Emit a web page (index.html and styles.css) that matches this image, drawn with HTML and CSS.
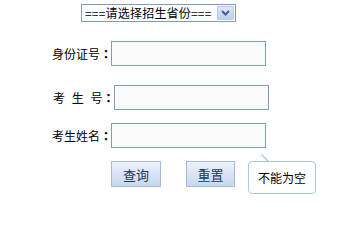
FILE: index.html
```html
<!DOCTYPE html>
<html>
<head>
<meta charset="utf-8">
<link rel="stylesheet" href="styles.css">
</head>
<body>
<div class="page">
  <div class="select-row">
    <div class="select">
      <span class="select-text">===请选择招生省份===</span>
      <span class="select-btn"><svg width="9" height="6" viewBox="0 0 9 6"><path d="M1 1 L4.5 4.5 L8 1" fill="none" stroke="#4a5f86" stroke-width="2"/></svg></span>
    </div>
  </div>
  <div class="row row-1">
    <span class="label label-a">身份证号<span class="colon">：</span></span>
    <span class="input"></span>
  </div>
  <div class="row row-2">
    <span class="label label-b">考 生 号<span class="colon">：</span></span>
    <span class="input"></span>
  </div>
  <div class="row row-3">
    <span class="label label-a">考生姓名<span class="colon">：</span></span>
    <span class="input"></span>
  </div>
  <div class="actions">
    <span class="btn btn-query">查询</span>
    <span class="btn btn-reset">重置</span>
    <div class="tip">不能为空</div>
  </div>
</div>
</body>
</html>
```
FILE: styles.css
```css
html, body {
  margin: 0;
  padding: 0;
  background: #ffffff;
}
body {
  font-family: "Noto Sans CJK SC", "Liberation Sans", sans-serif;
  font-size: 12px;
  color: #000000;
}
.page {
  padding-top: 4px;
}
.select-row {
  padding-left: 81px;
}
.select {
  box-sizing: border-box;
  width: 155px;
  height: 18px;
  border: 1px solid #7f9db9;
  display: flex;
  align-items: center;
  justify-content: space-between;
  padding: 0 1px 0 3px;
  background: #fff;
}
.select-text {
  line-height: 14px;
  white-space: nowrap;
  letter-spacing: 0.2px;
}
.select-btn {
  box-sizing: border-box;
  width: 17px;
  height: 14px;
  border: 1px solid #b9cbec;
  border-radius: 1px;
  background: linear-gradient(#dde7fa, #bccff2);
  display: flex;
  align-items: center;
  justify-content: center;
}
.row {
  display: flex;
  align-items: center;
}
.row-1 { margin-top: 19px; padding-left: 52px; }
.row-2 { margin-top: 19px; padding-left: 53px; }
.row-3 { margin-top: 13px; padding-left: 52px; }
.label {
  white-space: nowrap;
  line-height: 16px;
}
.label-a { width: 59px; }
.label-b { width: 61px; word-spacing: 4px; }
.colon {
  font-family: "Noto Sans CJK TC", "Noto Sans CJK SC", sans-serif;
  font-weight: bold;
  word-spacing: 0;
}
.input {
  box-sizing: border-box;
  width: 155px;
  height: 25px;
  border: 1px solid #7f9db9;
  background: #fafafa;
}
.actions {
  margin-top: 13px;
  padding-left: 111px;
  display: flex;
  align-items: flex-start;
}
.btn {
  box-sizing: border-box;
  height: 26px;
  border: 1px solid #a3badb;
  background: linear-gradient(#ecf1fa, #c7d7ee);
  color: #1d3668;
  display: flex;
  align-items: center;
  justify-content: center;
  font-size: 13px;
}
.btn-query { width: 50px; }
.btn-reset { width: 49px; margin-left: 25px; }
.tip {
  position: relative;
  box-sizing: border-box;
  width: 68px;
  height: 33px;
  margin-left: 13px;
  border: 1px solid #a9c9e2;
  border-radius: 4px;
  background: #fff;
  display: flex;
  align-items: center;
  justify-content: center;
  font-size: 12px;
  white-space: nowrap;
}
.tip::before,
.tip::after {
  content: "";
  position: absolute;
  width: 0;
  height: 0;
  border-style: solid;
  border-color: transparent;
}
.tip::before {
  top: -8px;
  left: 5px;
  border-width: 0 8px 8px 8px;
  border-bottom-color: #a9c9e2;
}
.tip::after {
  top: -6.6px;
  left: 6.4px;
  border-width: 0 6.6px 6.6px 6.6px;
  border-bottom-color: #ffffff;
}
```
